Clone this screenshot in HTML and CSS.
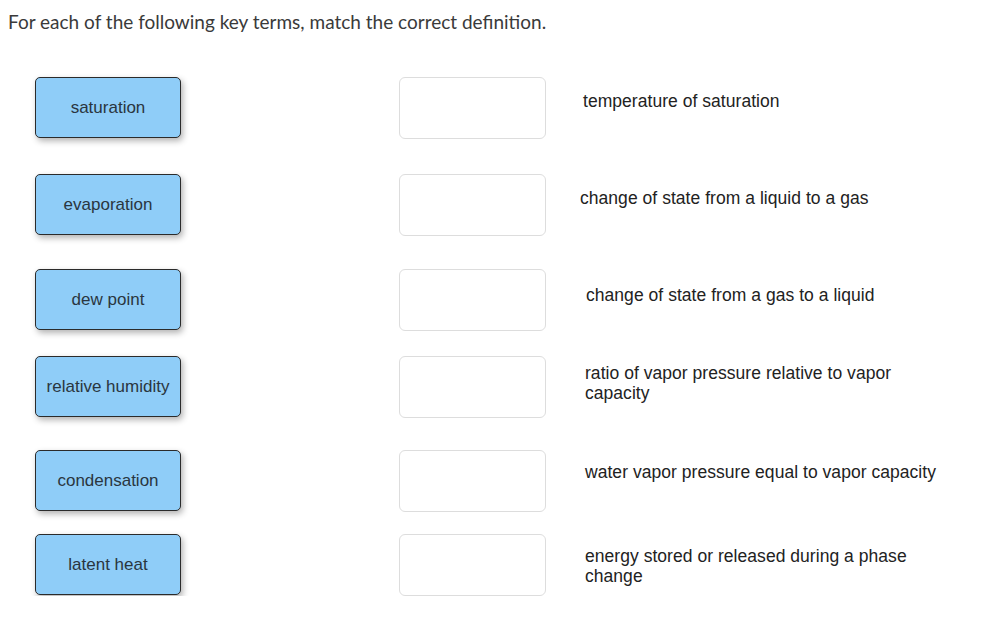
FILE: index.html
```html
<!DOCTYPE html>
<html>
<head>
<meta charset="utf-8">
<link rel="stylesheet" href="styles.css">
</head>
<body>
<p class="prompt">For each of the following key terms, match the correct definition.</p>
<div class="match">
  <div class="row">
    <div class="term">saturation</div>
    <div class="slot"></div>
    <div class="def">temperature of saturation</div>
  </div>
  <div class="row">
    <div class="term">evaporation</div>
    <div class="slot"></div>
    <div class="def">change of state from a liquid to a gas</div>
  </div>
  <div class="row">
    <div class="term">dew point</div>
    <div class="slot"></div>
    <div class="def">change of state from a gas to a liquid</div>
  </div>
  <div class="row">
    <div class="term">relative humidity</div>
    <div class="slot"></div>
    <div class="def">ratio of vapor pressure relative to vapor capacity</div>
  </div>
  <div class="row">
    <div class="term">condensation</div>
    <div class="slot"></div>
    <div class="def">water vapor pressure equal to vapor capacity</div>
  </div>
  <div class="row">
    <div class="term">latent heat</div>
    <div class="slot"></div>
    <div class="def">energy stored or released during a phase change</div>
  </div>
</div>
</body>
</html>
```
FILE: styles.css
```css
html, body {
  margin: 0;
  padding: 0;
  background: #fff;
}
body {
  padding: 11px 8px 0 8px;
}
.prompt {
  margin: 0;
  font-family: "Lato", "Liberation Sans", sans-serif;
  font-size: 19px;
  line-height: 22px;
  color: #3a3a3a;
}
.match {
  display: flex;
  flex-direction: column;
  padding-left: 27px;
}
.row {
  display: flex;
  align-items: flex-start;
  height: 62px;
}
.row:nth-child(1) { margin-top: 44px; }
.row:nth-child(2) { margin-top: 35px; }
.row:nth-child(3) { margin-top: 33px; }
.row:nth-child(4) { margin-top: 25px; }
.row:nth-child(5) { margin-top: 32px; }
.row:nth-child(6) { margin-top: 22px; }
.term {
  box-sizing: border-box;
  width: 146px;
  height: 61px;
  background: #8fcdf8;
  border: 1px solid #2b2b2b;
  border-radius: 5px;
  box-shadow: 2px 3px 6px rgba(0, 0, 0, 0.3);
  display: flex;
  align-items: center;
  justify-content: center;
  font-family: "Liberation Sans", Arial, sans-serif;
  font-size: 17px;
  color: #2a3640;
}
.slot {
  box-sizing: border-box;
  width: 147px;
  height: 62px;
  margin-left: 218px;
  border: 1px solid #ddd;
  border-radius: 6px;
  background: #fff;
}
.def {
  width: 368px;
  margin-left: 39px;
  font-family: "Liberation Sans", Arial, sans-serif;
  font-size: 17.5px;
  letter-spacing: 0.04px;
  line-height: 20px;
  color: #222;
}
.row:nth-child(1) .def { padding-top: 14px; margin-left: 37px; }
.row:nth-child(2) .def { padding-top: 14px; margin-left: 34px; }
.row:nth-child(3) .def { padding-top: 16px; margin-left: 40px; }
.row:nth-child(4) .def { padding-top: 7px; }
.row:nth-child(5) .def { padding-top: 12px; }
.row:nth-child(6) .def { padding-top: 12px; }
```
